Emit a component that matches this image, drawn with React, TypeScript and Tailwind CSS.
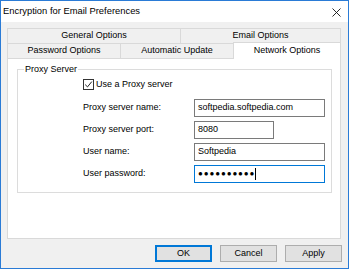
import { useState } from 'react'

const font = "font-['Liberation_Sans',Arial,sans-serif]"

function Tab({ label, width, selected }: { label: string; width: string; selected?: boolean }) {
  if (selected) {
    return (
      <div className={`${width} h-[17px] -mt-[2px] -mb-px relative z-10 bg-white border border-[#d9d9d9] border-b-0 flex items-center justify-center`}>
        {label}
      </div>
    )
  }
  return (
    <div className={`${width} h-[15px] bg-[#f0f0f0] border border-[#d9d9d9] border-b-0 -ml-px first:ml-0 flex items-center justify-center`}>
      {label}
    </div>
  )
}

function Field({ label, value, width, focused, password }: {
  label: string; value: string; width: string; focused?: boolean; password?: boolean
}) {
  return (
    <div className="flex items-center h-[18px]">
      <span className="w-[111px] shrink-0">{label}</span>
      <div className={`${width} h-[18px] bg-white border ${focused ? 'border-[#0078d7]' : 'border-[#7a7a7a]'} flex items-center pl-[3px]`}>
        {password ? (
          <>
            <span className="text-[8px] tracking-[0.9px] leading-none">{value}</span>
            <span className="w-px h-[12px] bg-black" />
          </>
        ) : (
          <span>{value}</span>
        )}
      </div>
    </div>
  )
}

export default function App() {
  const [useProxy, setUseProxy] = useState(true)

  return (
    <div className={`w-[350px] h-[270px] bg-white overflow-hidden text-[9px] text-black ${font}`}>
      <div className="w-[349px] h-[269px] border border-[#2a7bd6] flex flex-col">
        {/* Title bar */}
        <div className="h-[21px] bg-white flex items-center justify-between pl-[2px] pr-[7px]">
          <span className="text-[9.4px]">Encryption for Email Preferences</span>
          <svg width="9" height="9" viewBox="0 0 9 9" className="mt-px">
            <path d="M0.5 0.5 L8.5 8.5 M8.5 0.5 L0.5 8.5" stroke="#111" strokeWidth="0.9" fill="none" />
          </svg>
        </div>

        {/* Body */}
        <div className="flex-1 bg-[#f0f0f0] pl-[6px] pr-[6px] pt-[6px]">
          <div className="w-[334px]">
            <div className="flex">
              <Tab label="General Options" width="w-[174px]" />
              <Tab label="Email Options" width="w-[161px]" />
            </div>
            <div className="flex items-end h-[15px]">
              <Tab label="Password Options" width="w-[114px]" />
              <Tab label="Automatic Update" width="w-[114px]" />
              <Tab label="Network Options" width="w-[108px] -ml-px" selected />
            </div>

            {/* Panel */}
            <div className="h-[181px] bg-white border border-[#d9d9d9] pt-[5px] pl-[9px] pr-[9px]">
              <fieldset className="border border-[#dcdcdc] h-[129px] pl-[65px] pr-[6px]">
                <legend className="ml-[-59px] px-px leading-[11px]">Proxy Server</legend>
                <label className="flex items-center gap-[2px] h-[11px] mt-[4px]">
                  <span
                    onClick={() => setUseProxy(!useProxy)}
                    className="w-[11px] h-[11px] bg-white border border-[#333] flex items-center justify-center"
                  >
                    {useProxy && (
                      <svg width="9" height="9" viewBox="0 0 9 9">
                        <path d="M1.2 4.6 L3.5 6.9 L7.8 1.6" stroke="#222" strokeWidth="1" fill="none" />
                      </svg>
                    )}
                  </span>
                  <span>Use a Proxy server</span>
                </label>
                <div className="flex flex-col gap-[4px] mt-[9px]">
                  <Field label="Proxy server name:" value="softpedia.softpedia.com" width="w-[131px]" />
                  <Field label="Proxy server port:" value="8080" width="w-[80px]" />
                  <Field label="User name:" value="Softpedia" width="w-[131px]" />
                  <Field label="User password:" value="●●●●●●●●●●" width="w-[131px]" focused password />
                </div>
              </fieldset>
            </div>
          </div>

          {/* Buttons */}
          <div className="flex justify-end gap-[8px] mt-[6px]">
            <button className="w-[57px] h-[17px] bg-[#e1e1e1] border-2 border-[#0078d7]">OK</button>
            <button className="w-[57px] h-[17px] bg-[#e1e1e1] border border-[#adadad]">Cancel</button>
            <button className="w-[57px] h-[17px] bg-[#e1e1e1] border border-[#adadad]">Apply</button>
          </div>
        </div>
      </div>
    </div>
  )
}
